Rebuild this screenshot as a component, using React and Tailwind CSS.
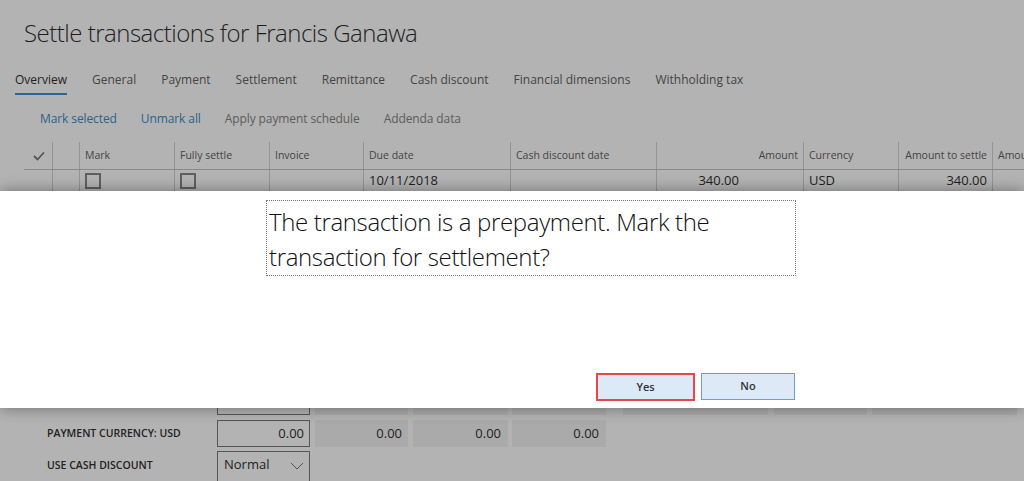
import React from 'react';

const tabs = ['Overview', 'General', 'Payment', 'Settlement', 'Remittance', 'Cash discount', 'Financial dimensions', 'Withholding tax'];

const columns = [
  { w: 'w-[28px]', label: '' },
  { w: 'w-[27px]', label: '' },
  { w: 'w-[95px]', label: 'Mark' },
  { w: 'w-[95px]', label: 'Fully settle' },
  { w: 'w-[94px]', label: 'Invoice' },
  { w: 'w-[147px]', label: 'Due date' },
  { w: 'w-[146px]', label: 'Cash discount date' },
  { w: 'w-[147px]', label: 'Amount', right: true },
  { w: 'w-[95px]', label: 'Currency' },
  { w: 'w-[94px]', label: 'Amount to settle', right: true },
  { w: 'w-[80px]', label: 'Amount in transaction currency' },
];

const CheckBox = () => (
  <div className="w-[16px] h-[16px] border-2 border-[#5f5f5f]" />
);

const App = () => {
  return (
    <div
      className="relative w-full h-[481px] overflow-hidden bg-[#b3b3b3] text-[#222]"
      style={{ fontFamily: '"Segoe UI", "Open Sans", sans-serif' }}
    >
      {/* PAGE HEADER */}
      <h1 className="pl-[24px] pt-[15px] text-[24px] font-light tracking-[-0.5px] leading-[36px] text-[#1e1e1e]">
        Settle transactions for Francis Ganawa
      </h1>

      {/* TABS */}
      <div className="flex gap-[25px] pl-[15px] mt-[20px] text-[12px] text-[#444]">
        {tabs.map((t, i) => (
          <div key={t} className="flex flex-col">
            <span className={i === 0 ? 'text-[#1e1e1e] leading-[18px]' : 'leading-[18px]'}>{t}</span>
            <div className={i === 0 ? 'h-[2px] mt-[4px] bg-[#2d6494]' : 'h-[2px] mt-[4px]'} />
          </div>
        ))}
      </div>

      {/* ACTION BAR */}
      <div className="flex gap-[24px] pl-[40px] mt-[15px] text-[12px] tracking-[-0.1px] leading-[18px]">
        <span className="text-[#2d5f8c]">Mark selected</span>
        <span className="text-[#2d5f8c]">Unmark all</span>
        <span className="text-[#5c5c5c]">Apply payment schedule</span>
        <span className="text-[#5c5c5c]">Addenda data</span>
      </div>

      {/* GRID */}
      <div className="ml-[24px] mt-[14px] flex flex-col text-[10.5px]">
        <div className="flex h-[28px] border-b border-[#8a8a8a]">
          {columns.map((c, i) => (
            <div
              key={i}
              className={`${c.w} shrink-0 flex items-center px-[5px] whitespace-nowrap overflow-hidden text-[#444] ${i > 0 ? 'border-l border-[#939393]' : ''} ${c.right ? 'justify-end' : ''}`}
            >
              {i === 0 ? (
                <svg width="12" height="10" viewBox="0 0 12 10" className="ml-[4px]">
                  <polyline points="1,5 4.5,8.5 11,1.5" fill="none" stroke="#555" strokeWidth="1.8" />
                </svg>
              ) : (
                c.label
              )}
            </div>
          ))}
        </div>
        <div className="flex h-[22px] text-[13px] text-[#1e1e1e]">
          <div className="w-[28px] shrink-0" />
          <div className="w-[27px] shrink-0 border-l border-[#939393]" />
          <div className="w-[95px] shrink-0 border-l border-[#939393] pl-[5px] flex items-center"><CheckBox /></div>
          <div className="w-[95px] shrink-0 border-l border-[#939393] pl-[5px] flex items-center"><CheckBox /></div>
          <div className="w-[94px] shrink-0 border-l border-[#939393]" />
          <div className="w-[147px] shrink-0 border-l border-[#939393] pl-[5px] flex items-center">10/11/2018</div>
          <div className="w-[146px] shrink-0 border-l border-[#939393]" />
          <div className="w-[147px] shrink-0 border-l border-[#939393] pr-[64px] flex items-center justify-end">340.00</div>
          <div className="w-[95px] shrink-0 border-l border-[#939393] pl-[5px] flex items-center">USD</div>
          <div className="w-[94px] shrink-0 border-l border-[#939393] pr-[5px] flex items-center justify-end">340.00</div>
          <div className="w-[80px] shrink-0 border-l border-[#939393]" />
        </div>
      </div>

      {/* SUMMARY FIELDS (mostly behind the dialog) */}
      <div className="mt-[196px] flex flex-col gap-[5px] text-[10.5px]">
        <div className="flex h-[27px] items-center">
          <div className="w-[217px] shrink-0" />
          <div className="w-[93px] h-full shrink-0 border border-[#555]" />
          <div className="ml-[5px] w-[93px] h-full bg-[#aaaaaa]" />
          <div className="ml-[5px] w-[95px] h-full bg-[#aaaaaa]" />
          <div className="ml-[4px] w-[94px] h-full bg-[#aaaaaa]" />
          <div className="ml-[17px] w-[145px] h-full bg-[#aaaaaa]" />
          <div className="ml-[6px] w-[93px] h-full bg-[#aaaaaa]" />
          <div className="ml-[5px] w-[145px] h-full bg-[#aaaaaa]" />
        </div>
        <div className="flex h-[27px] items-center">
          <div className="w-[217px] shrink-0 pl-[47px] font-semibold text-[#222] uppercase">Payment currency: USD</div>
          <div className="w-[93px] h-full shrink-0 border border-[#555] flex items-center justify-end pr-[5px] text-[13px] text-[#222]">0.00</div>
          <div className="ml-[5px] w-[93px] h-full bg-[#aaaaaa] flex items-center justify-end pr-[6px] text-[13px] text-[#222]">0.00</div>
          <div className="ml-[5px] w-[95px] h-full bg-[#aaaaaa] flex items-center justify-end pr-[7px] text-[13px] text-[#222]">0.00</div>
          <div className="ml-[4px] w-[94px] h-full bg-[#aaaaaa] flex items-center justify-end pr-[7px] text-[13px] text-[#222]">0.00</div>
        </div>
        <div className="flex h-[34px] items-start -mt-[1px]">
          <div className="w-[217px] shrink-0 pl-[47px] font-semibold text-[#222] uppercase self-center -mt-[5px]">Use cash discount</div>
          <div className="w-[93px] h-full shrink-0 border border-[#555] border-b-0 flex items-start justify-between pl-[6px] pr-[5px] pt-[3px] text-[13px] text-[#222]">
            <span>Normal</span>
            <svg width="14" height="8" viewBox="0 0 14 8" className="mt-[7px]">
              <polyline points="1,1 7,7 13,1" fill="none" stroke="#555" strokeWidth="1" />
            </svg>
          </div>
        </div>
      </div>

      {/* DIALOG */}
      <div className="absolute left-0 right-0 top-[191px] h-[217px] bg-white shadow-[0_0_14px_rgba(0,0,0,0.4)] flex flex-col">
        <div className="mt-[9px] ml-[266px] w-[530px] h-[76px] border border-dotted border-[#777] pl-[2px] pt-[3px] text-[24px] font-light tracking-[-0.35px] leading-[35px] text-[#111]">
          The transaction is a prepayment. Mark the transaction for settlement?
        </div>
        <div className="mt-auto mb-[7px] self-end mr-[229px] flex items-start gap-[6px] text-[11px] font-semibold text-[#333]">
          <button className="w-[99px] h-[28px] border-2 border-[#e5474a] bg-[#dde9f6] flex items-center justify-center">Yes</button>
          <button className="w-[94px] h-[27px] border border-[#6a9fd3] bg-[#dde9f6] flex items-center justify-center">No</button>
        </div>
      </div>
    </div>
  );
};

export default App;
